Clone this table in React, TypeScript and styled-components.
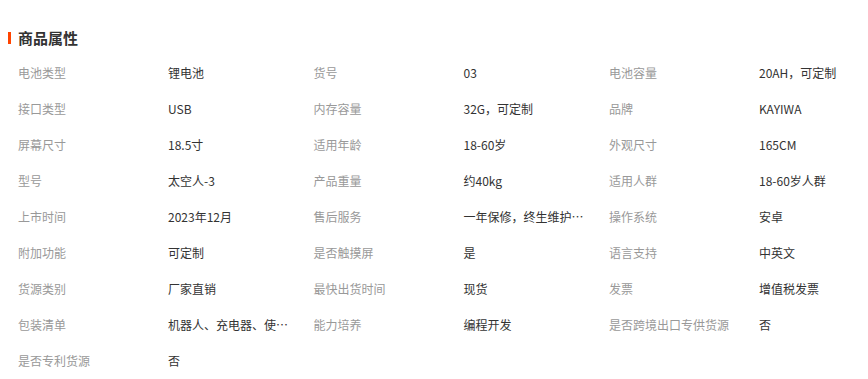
import React from "react";
import styled, { createGlobalStyle } from "styled-components";

const GlobalStyle = createGlobalStyle`
  html, body {
    margin: 0;
    padding: 0;
    background: #ffffff;
  }
  body {
    font-family: "Microsoft YaHei", "Noto Sans CJK SC", "Noto Sans", sans-serif;
  }
`;

const Page = styled.div`
  padding: 28px 8px 0 8px;
  width: 868px;
  box-sizing: border-box;
`;

const Title = styled.h2`
  display: flex;
  align-items: center;
  margin: 0;
  height: 20px;
  font-size: 15px;
  line-height: 20px;
  font-weight: 700;
  color: #333333;

  &::before {
    content: "";
    display: block;
    width: 3px;
    height: 12px;
    margin-right: 7px;
    background: #ff4400;
  }
`;

const Grid = styled.div`
  display: grid;
  grid-template-columns: repeat(3, 150px 145.5px);
  grid-auto-rows: 36px;
  margin-top: 7px;
  align-items: center;
`;

const Label = styled.div`
  padding-left: 10px;
  font-size: 12px;
  line-height: 18px;
  color: #999999;
  white-space: nowrap;
`;

const Value = styled.div`
  padding-left: 10px;
  max-width: 124px;
  font-size: 12px;
  line-height: 18px;
  color: #333333;
  white-space: nowrap;
  overflow: hidden;
  text-overflow: ellipsis;
`;

const attrs: [string, string][] = [
  ["电池类型", "锂电池"],
  ["货号", "03"],
  ["电池容量", "20AH，可定制"],
  ["接口类型", "USB"],
  ["内存容量", "32G，可定制"],
  ["品牌", "KAYIWA"],
  ["屏幕尺寸", "18.5寸"],
  ["适用年龄", "18-60岁"],
  ["外观尺寸", "165CM"],
  ["型号", "太空人-3"],
  ["产品重量", "约40kg"],
  ["适用人群", "18-60岁人群"],
  ["上市时间", "2023年12月"],
  ["售后服务", "一年保修，终生维护，免费升级"],
  ["操作系统", "安卓"],
  ["附加功能", "可定制"],
  ["是否触摸屏", "是"],
  ["语言支持", "中英文"],
  ["货源类别", "厂家直销"],
  ["最快出货时间", "现货"],
  ["发票", "增值税发票"],
  ["包装清单", "机器人、充电器、使用说明书"],
  ["能力培养", "编程开发"],
  ["是否跨境出口专供货源", "否"],
  ["是否专利货源", "否"],
];

export default function App() {
  return (
    <>
      <GlobalStyle />
      <Page>
        <Title>商品属性</Title>
        <Grid>
          {attrs.map(([k, v]) => (
            <React.Fragment key={k}>
              <Label>{k}</Label>
              <Value title={v}>{v}</Value>
            </React.Fragment>
          ))}
        </Grid>
      </Page>
    </>
  );
}
